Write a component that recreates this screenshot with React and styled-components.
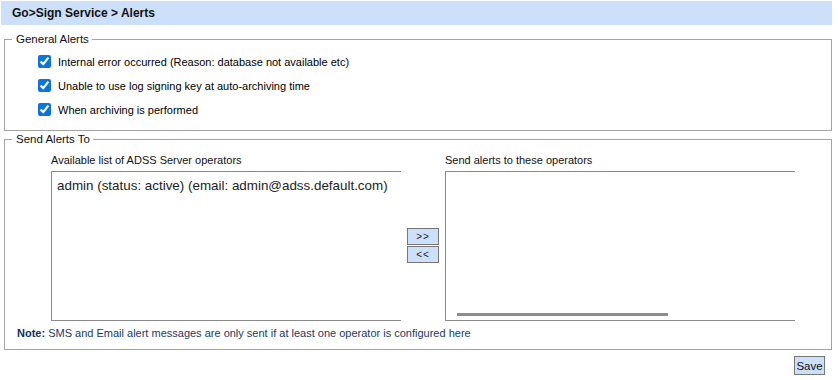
import React from "react";
import styled, { createGlobalStyle } from "styled-components";

const GlobalStyle = createGlobalStyle`
  html, body {
    margin: 0;
    padding: 0;
    background: #ffffff;
  }
  body {
    font-family: "Liberation Sans", Arial, sans-serif;
    font-size: 11px;
    color: #000;
  }
`;

const Page = styled.div`
  width: 838px;
  height: 380px;
  box-sizing: border-box;
  padding: 1px 6px 0 1px;
  display: flex;
  flex-direction: column;
`;

const TitleBar = styled.div`
  height: 24px;
  background: #cde0fb;
  display: flex;
  align-items: center;
  padding-left: 11px;
  font-weight: bold;
  font-size: 12px;
  color: #111;
`;

const Group = styled.fieldset`
  margin: ${(p) => p.$top}px 0 0 3px;
  padding: 0;
  border: 1px solid #a3a3a3;
  box-shadow: inset 1px 1px 0 #fff;
  min-width: 0;
  height: ${(p) => p.$height}px;
  box-sizing: border-box;
`;

const Legend = styled.legend`
  margin-left: 7px;
  padding: 0 3px 0 4px;
  font-size: 11.5px;
  line-height: 16px;
  color: #111;
`;

const CheckList = styled.div`
  display: flex;
  flex-direction: column;
  gap: 11px;
  padding: 8px 0 0 33px;
`;

const CheckRow = styled.label`
  display: flex;
  align-items: center;
  gap: 7px;
  height: 13px;
  font-size: 11px;
`;

const Box = styled.input`
  width: 13px;
  height: 13px;
  margin: 0;
  accent-color: #0b74e0;
`;

const Columns = styled.div`
  display: flex;
  align-items: flex-start;
  padding: 7px 0 0 46px;
`;

const Column = styled.div`
  display: flex;
  flex-direction: column;
  gap: 3px;
`;

const ColLabel = styled.div`
  font-size: 11px;
  color: #111;
  height: 14px;
`;

const ListBox = styled.div`
  width: 350px;
  height: 150px;
  box-sizing: border-box;
  border: 1px solid #8a8a8a;
  border-right: none;
  padding: 6px 5px;
  font-size: 13.4px;
  color: #222;
  display: flex;
  flex-direction: column;
  justify-content: space-between;
`;

const ScrollThumb = styled.div`
  width: 211px;
  height: 3px;
  background: #8c8c8c;
  margin: 0 0 -2px 6px;
`;

const Movers = styled.div`
  display: flex;
  flex-direction: column;
  gap: 1px;
  margin: 74px 6px 0 6px;
`;

const SmallButton = styled.button`
  width: 32px;
  height: 17px;
  box-sizing: border-box;
  border: 1px solid #777;
  background: #cce0fc;
  font-family: "Liberation Sans", Arial, sans-serif;
  font-size: 10px;
  letter-spacing: 1px;
  padding: 0;
  color: #222;
`;

const NoteLine = styled.div`
  padding: 6px 0 0 12px;
  font-size: 11px;
  color: #1b3a66;
  b {
    color: #12305a;
  }
`;

const Footer = styled.div`
  display: flex;
  justify-content: flex-end;
  padding: 6px 7px 0 0;
`;

const SaveButton = styled.button`
  width: 31px;
  height: 19px;
  box-sizing: border-box;
  border: 1px solid #777;
  background: #cce0fc;
  font-family: "Liberation Sans", Arial, sans-serif;
  font-size: 11.5px;
  padding: 0;
  color: #111;
`;

const alerts = [
  "Internal error occurred (Reason: database not available etc)",
  "Unable to use log signing key at auto-archiving time",
  "When archiving is performed",
];

export default function App() {
  return (
    <>
      <GlobalStyle />
      <Page>
        <TitleBar>Go&gt;Sign Service &gt; Alerts</TitleBar>
        <Group $top={6} $height={100}>
          <Legend>General Alerts</Legend>
          <CheckList>
            {alerts.map((a) => (
              <CheckRow key={a}>
                <Box type="checkbox" defaultChecked />
                {a}
              </CheckRow>
            ))}
          </CheckList>
        </Group>
        <Group $top={0} $height={219}>
          <Legend>Send Alerts To</Legend>
          <Columns>
            <Column>
              <ColLabel>Available list of ADSS Server operators</ColLabel>
              <ListBox>
                <div>admin (status: active) (email: admin@adss.default.com)</div>
              </ListBox>
            </Column>
            <Movers>
              <SmallButton>&gt;&gt;</SmallButton>
              <SmallButton>&lt;&lt;</SmallButton>
            </Movers>
            <Column>
              <ColLabel>Send alerts to these operators</ColLabel>
              <ListBox>
                <div />
                <ScrollThumb />
              </ListBox>
            </Column>
          </Columns>
          <NoteLine>
            <b>Note:</b> SMS and Email alert messages are only sent if at least one operator is configured here
          </NoteLine>
        </Group>
        <Footer>
          <SaveButton>Save</SaveButton>
        </Footer>
      </Page>
    </>
  );
}
